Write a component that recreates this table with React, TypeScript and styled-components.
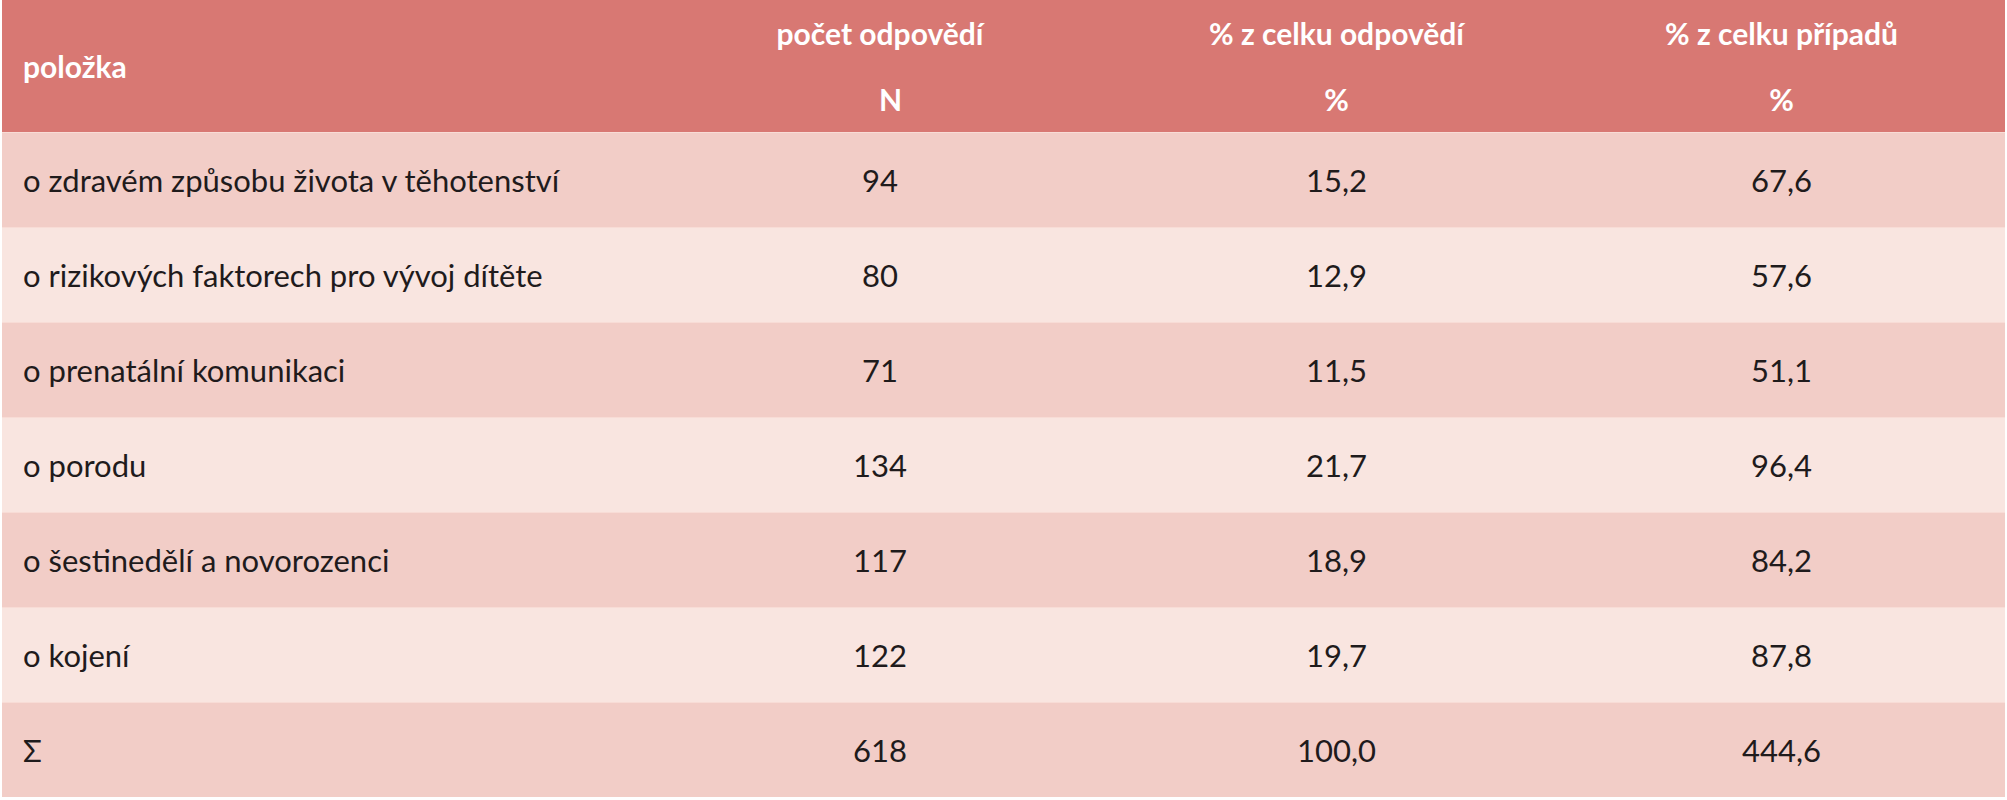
import React from 'react'
import styled, { createGlobalStyle } from 'styled-components'

const GlobalStyle = createGlobalStyle`
  html, body {
    margin: 0;
    padding: 0;
    background: #ffffff;
  }
  body {
    font-family: Lato, "Open Sans", "Liberation Sans", sans-serif;
  }
`

const Page = styled.div`
  width: 2007px;
  height: 800px;
  padding: 0 2px 0 2px;
  box-sizing: border-box;
`

const Table = styled.table`
  width: 2003px;
  border-collapse: collapse;
  table-layout: fixed;
  font-size: 31px;
  color: #1f1b1c;
`

const HeadRow = styled.tr`
  background: #d87873;
  color: #ffffff;
`

const HeadCell = styled.th<{ $align?: string }>`
  height: 66px;
  padding: 0 0 0 21px;
  text-align: ${(p) => p.$align || 'center'};
  font-size: 30px;
  font-weight: 700;
  vertical-align: middle;
  &:not(:first-child) {
    padding: 0;
  }
`

const Row = styled.tr<{ $light?: boolean }>`
  background: ${(p) => (p.$light ? '#f9e5e0' : '#f2cdc7')};
  border-top: 1px solid #f8dcd6;
`

const LabelCell = styled.td`
  height: 94px;
  padding: 0 0 0 21px;
  vertical-align: middle;
`

const NumCell = styled.td`
  text-align: center;
  vertical-align: middle;
  padding: 0;
`

const rows = [
  ['o zdravém způsobu života v těhotenství', '94', '15,2', '67,6'],
  ['o rizikových faktorech pro vývoj dítěte', '80', '12,9', '57,6'],
  ['o prenatální komunikaci', '71', '11,5', '51,1'],
  ['o porodu', '134', '21,7', '96,4'],
  ['o šestinedělí a novorozenci', '117', '18,9', '84,2'],
  ['o kojení', '122', '19,7', '87,8'],
  ['Σ', '618', '100,0', '444,6'],
]

export default function App() {
  return (
    <Page>
      <GlobalStyle />
      <Table>
        <colgroup>
          <col style={{ width: 643 }} />
          <col style={{ width: 470 }} />
          <col style={{ width: 443 }} />
          <col style={{ width: 447 }} />
        </colgroup>
        <thead>
          <HeadRow>
            <HeadCell rowSpan={2} $align="left">
              položka
            </HeadCell>
            <HeadCell>počet odpovědí</HeadCell>
            <HeadCell>% z celku odpovědí</HeadCell>
            <HeadCell>% z celku případů</HeadCell>
          </HeadRow>
          <HeadRow>
            <HeadCell>N</HeadCell>
            <HeadCell>%</HeadCell>
            <HeadCell>%</HeadCell>
          </HeadRow>
        </thead>
        <tbody>
          {rows.map((r, i) => (
            <Row key={r[0]} $light={i % 2 === 1}>
              <LabelCell>{r[0]}</LabelCell>
              <NumCell>{r[1]}</NumCell>
              <NumCell>{r[2]}</NumCell>
              <NumCell>{r[3]}</NumCell>
            </Row>
          ))}
        </tbody>
      </Table>
    </Page>
  )
}
